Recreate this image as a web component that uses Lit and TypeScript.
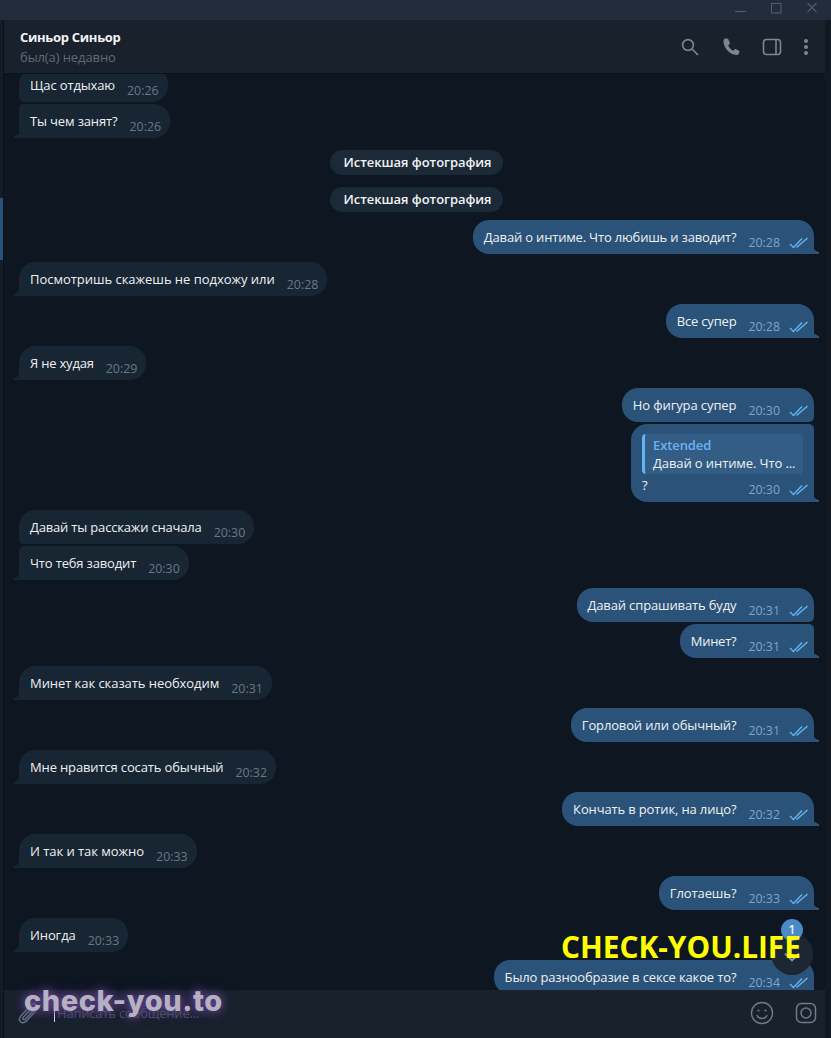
import { LitElement, html, css, svg } from "lit";
import { customElement } from "lit/decorators.js";

type Msg = { k: "in" | "out" | "svc"; t?: string; h?: string; tail?: boolean; cont?: boolean; reply?: boolean; ls?: number };

const msgs: Msg[] = [
  { k: "in", t: "Щас отдыхаю", h: "20:26" },
  { k: "in", t: "Ты чем занят?", h: "20:26", tail: true, cont: true },
  { k: "svc", t: "Истекшая фотография" },
  { k: "svc", t: "Истекшая фотография" },
  { k: "out", t: "Давай о интиме. Что любишь и заводит?", h: "20:28", tail: true, ls: -0.18 },
  { k: "in", t: "Посмотришь скажешь не подхожу или", h: "20:28", tail: true, ls: -0.03 },
  { k: "out", t: "Все супер", h: "20:28", tail: true, ls: -0.2 },
  { k: "in", t: "Я не худая", h: "20:29", tail: true, ls: -0.2 },
  { k: "out", t: "Но фигура супер", h: "20:30", ls: -0.1 },
  { k: "out", t: "?", h: "20:30", tail: true, cont: true, reply: true },
  { k: "in", t: "Давай ты расскажи сначала", h: "20:30", ls: -0.18 },
  { k: "in", t: "Что тебя заводит", h: "20:30", tail: true, cont: true, ls: -0.16 },
  { k: "out", t: "Давай спрашивать буду", h: "20:31" },
  { k: "out", t: "Минет?", h: "20:31", tail: true, cont: true, ls: -0.25 },
  { k: "in", t: "Минет как сказать необходим", h: "20:31", tail: true, ls: -0.06 },
  { k: "out", t: "Горловой или обычный?", h: "20:31", tail: true },
  { k: "in", t: "Мне нравится сосать обычный", h: "20:32", tail: true },
  { k: "out", t: "Кончать в ротик, на лицо?", h: "20:32", tail: true },
  { k: "in", t: "И так и так можно", h: "20:33", tail: true, ls: -0.04 },
  { k: "out", t: "Глотаешь?", h: "20:33", tail: true, ls: -0.1 },
  { k: "in", t: "Иногда", h: "20:33", tail: true, ls: -0.1 },
  { k: "out", t: "Было разнообразие в сексе какое то?", h: "20:34", tail: true },
];

const checks = svg`<svg class="chk" width="19" height="12" viewBox="0 0 19 12" fill="none" stroke="#64b5ef" stroke-width="1.4"><path d="M1 7l3.5 3.500L13 1.500"/><path d="M7.500 10.500L18.500 1"/></svg>`;

@customElement("app-root")
export class AppRoot extends LitElement {
  static styles = css`
    :host { display: block; width: 831px; height: 1038px; overflow: hidden; position: relative; background: #121a25; font-family: "Open Sans", "DejaVu Sans", sans-serif; font-size: 13px; letter-spacing: -0.1px; color: #f1f3f5; }
    .titlebar { height: 20px; background: #222d3b; display: flex; justify-content: flex-end; align-items: flex-start; }
    .titlebar svg { display: block; }
    .body { display: flex; height: 1018px; }
    .strip { width: 3px; background: #141c27; position: relative; flex: none; border-right: 1px solid #0b1119; }
    .accent { position: absolute; left: 0; top: 178px; width: 3px; height: 62px; background: #2b5278; }
    .rstrip { width: 6px; background: #121923; flex: none; }
    .main { flex: 1; min-width: 0; display: flex; flex-direction: column; background: #0e1621; }
    .head { height: 53px; flex: none; background: #18212c; display: flex; align-items: center; justify-content: space-between; padding: 0 16px 0 16px; box-shadow: 0 1px 0 #0b1119; position: relative; z-index: 2; box-sizing: border-box; }
    .name { font-weight: 700; font-size: 13px; letter-spacing: -0.3px; line-height: 18px; color: #f0f2f4; }
    .status { font-size: 13px; line-height: 18px; margin-top: 2px; color: #5f6b78; }
    .icons { display: flex; align-items: center; gap: 21px; }
    .icons svg { display: block; }
    .chat { flex: 1; min-height: 0; overflow: hidden; box-sizing: border-box; }
    .list { display: flex; flex-direction: column; margin-top: -13px; padding: 0 11px 0 15px; }
    .row { display: flex; margin-top: 8px; }
    .row.cont { margin-top: 2px; }
    .row.out { justify-content: flex-end; }
    .row.svc { justify-content: center; margin: 12px 0 0; }
    .row.svc + .row:not(.svc) { margin-top: 8px; }
    .pill { height: 25px; line-height: 24px; padding: 0 11px 0 13px; border-radius: 12.5px; background: #1c2936; font-weight: 600; letter-spacing: -0.05px; color: #f1f3f5; }
    .bub { position: relative; box-sizing: border-box; min-height: 34px; display: flex; border-radius: 16px; padding: 0 9px 0 11px; }
    .in .bub { background: #182533; border-bottom-left-radius: 5px; }
    .in.cont .bub { border-top-left-radius: 5px; }
    .out .bub { background: #2b5278; padding-right: 6px; border-bottom-right-radius: 5px; }
    .out.cont .bub { border-top-right-radius: 5px; }
    .bub.tail::after { content: ""; position: absolute; bottom: 0; width: 6px; height: 8px; }
    .in .bub.tail { border-bottom-left-radius: 0; }
    .out .bub.tail { border-bottom-right-radius: 0; }
    .in .bub.tail::after { left: -5px; background: radial-gradient(circle at 0 0, transparent 5.5px, #182533 6px); }
    .out .bub.tail::after { right: -5px; background: radial-gradient(circle at 100% 0, transparent 5.5px, #2b5278 6px); }
    .txt { line-height: 18px; padding-top: 8px; white-space: nowrap; letter-spacing: -0.14px; color: #eef1f4; }
    .meta { display: flex; align-items: center; margin-left: 12px; height: 18px; padding-top: 14px; font-size: 12.4px; letter-spacing: 0; line-height: 18px; white-space: nowrap; }
    .in .meta { color: #6a7886; }
    .out .meta { color: #7da6cf; }
    .chk { margin-left: 9px; display: block; }
    .out .bub.rep { display: flex; flex-direction: column; height: 78px; width: 183px; padding: 10px 11px 0; }
    .quote { height: 40px; box-sizing: border-box; border-radius: 4px; background: #335d85; border-left: 3px solid #64b5ef; padding: 2px 0 0 8px; line-height: 18px; white-space: nowrap; overflow: hidden; }
    .qn { color: #6ab3f3; font-weight: 600; }
    .qt { color: #eef1f4; }
    .repfoot { display: flex; justify-content: space-between; height: 28px; }
    .repfoot .q { line-height: 22px; color: #eef1f4; }
    .repfoot .meta { padding-top: 7px; margin-right: -5px; }
    .composer { height: 48px; flex: none; background: #18212c; display: flex; align-items: center; padding: 0 8px 2px 13px; position: relative; z-index: 2; box-sizing: border-box; }
    .clip { display: block; margin-top: 2px; }
    .cursor { width: 1px; height: 18px; background: #d8dde2; margin-left: 15px; flex: none; }
    .ph { color: #4a5562; margin-left: 2px; flex: 1; line-height: 18px; letter-spacing: -0.2px; }
    .cicons { display: flex; align-items: center; gap: 21px; }
    .cicons svg { display: block; }
    .down { position: absolute; left: 771px; top: 933px; width: 42px; height: 42px; border-radius: 50%; background: #1c2733; z-index: 3; display: flex; align-items: center; justify-content: center; }
    .downicon { margin-top: 6px; display: block; }
    .badge { position: absolute; left: 781px; top: 919px; width: 22px; height: 22px; border-radius: 50%; background: #4a8ac7; color: #eef3f8; font-size: 12px; font-weight: 600; line-height: 22px; text-align: center; z-index: 4; }
    .wm1 { position: absolute; left: 561px; top: 927px; font-size: 29.8px; line-height: 40px; font-weight: 700; letter-spacing: 0; color: #ffff00; z-index: 5; white-space: nowrap; }
    .wm2 { position: absolute; left: 24px; top: 981px; font-family: Inter, "Open Sans", sans-serif; font-size: 29px; line-height: 40px; font-weight: 800; color: #b6b1c0; z-index: 5; white-space: nowrap; letter-spacing: 0.55px; text-shadow: 0 0 8px #6c4a9e, 0 0 14px #5a3d88; }
  `;

  private bubble(m: Msg) {
    if (m.k === "svc") return html`<div class="row svc"><div class="pill">${m.t}</div></div>`;
    const cls = `row ${m.k} ${m.cont ? "cont" : ""}`;
    const tail = m.tail ? "tail" : "";
    if (m.reply) {
      return html`<div class=${cls}><div class="bub rep ${tail}">
        <div class="quote"><div class="qn">Extended</div><div class="qt">Давай о интиме. Что ...</div></div>
        <div class="repfoot"><span class="q">${m.t}</span><span class="meta">${m.h}${checks}</span></div>
      </div></div>`;
    }
    const ls = m.ls !== undefined ? `letter-spacing:${m.ls}px` : "";
    return html`<div class=${cls}><div class="bub ${tail}">
      <span class="txt" style=${ls}>${m.t}</span>
      <span class="meta">${m.h}${m.k === "out" ? checks : ""}</span>
    </div></div>`;
  }

  render() {
    return html`
      <div class="titlebar">
        <svg width="100" height="20" viewBox="0 0 100 20" fill="none" stroke="#4f5b68" stroke-width="1.2">
          <path d="M4 11.500h11"/>
          <rect x="40.500" y="3.500" width="9.500" height="9.500" stroke-width="1.100"/>
          <path d="M76.500 3l9 9M85.500 3l-9 9"/>
        </svg>
      </div>
      <div class="body">
        <div class="strip"><div class="accent"></div></div>
        <div class="main">
          <div class="head">
            <div>
              <div class="name">Синьор Синьор</div>
              <div class="status">был(а) недавно</div>
            </div>
            <div class="icons">
              <svg width="20" height="20" viewBox="0 0 20 20" fill="none" stroke="#7c8792" stroke-width="1.6"><circle cx="8" cy="8" r="5.400"/><path d="M12 12L18 18"/></svg>
              <svg width="20" height="20" viewBox="0 0 20 20" fill="#7c8792"><path d="M4.200 1.500c-.9.3-1.700 1.300-1.700 2.400 0 6.600 5.600 13.300 13 14 1 .1 2-.5 2.400-1.500l.5-1.600c.1-.5-.1-1-.6-1.200l-3-1.400c-.5-.2-1-.1-1.300.3l-1 1.300c-2.400-1-4.600-3.500-5.300-5.900l1.300-.9c.4-.3.5-.8.4-1.200L7.100 2c-.2-.5-.7-.7-1.200-.6z"/></svg>
              <svg width="20" height="18" viewBox="0 0 20 18" fill="none" stroke="#7c8792" stroke-width="1.600"><rect x="1.500" y="1.500" width="17" height="15" rx="3"/><path d="M14 1.500v15"/></svg>
              <svg width="6" height="20" viewBox="0 0 6 20" fill="#7c8792"><circle cx="3" cy="4" r="2"/><circle cx="3" cy="10" r="2"/><circle cx="3" cy="16" r="2"/></svg>
            </div>
          </div>
          <div class="chat"><div class="list">${msgs.map((m) => this.bubble(m))}</div></div>
          <div class="composer">
            <svg class="clip" width="22" height="24" viewBox="0 0 22 24" fill="none" stroke="#66727e" stroke-width="1.500" stroke-linecap="round"><path d="M19 8.500l-9.500 10.500c-1.800 2-4.500 2.300-6 .8s-1.200-4 .6-6L14 3c1.300-1.400 3.100-1.500 4.200-.5s1 2.800-.3 4.200L8.500 17c-.7.8-1.700.9-2.300.3s-.4-1.500.3-2.300L14.500 6.500"/></svg>
            <div class="cursor"></div>
            <div class="ph">Написать сообщение...</div>
            <div class="cicons">
              <svg width="24" height="24" viewBox="0 0 24 24" fill="none" stroke="#6f7b87" stroke-width="1.400"><circle cx="12" cy="12" r="10.500"/><circle cx="8.500" cy="9.500" r="1.100" fill="#6f7b87" stroke="none"/><circle cx="15.500" cy="9.500" r="1.100" fill="#6f7b87" stroke="none"/><path d="M7 14.500c1.200 2 3 3 5 3s3.800-1 5-3" stroke-linecap="round"/></svg>
              <svg width="22" height="22" viewBox="0 0 22 22" fill="none" stroke="#6f7b87" stroke-width="1.500"><rect x="1.500" y="1.500" width="19" height="19" rx="5"/><circle cx="11" cy="11" r="5"/></svg>
            </div>
          </div>
        </div>
        <div class="rstrip"></div>
      </div>
      <div class="down"><svg class="downicon" width="18" height="10" viewBox="0 0 18 10" fill="none" stroke="#8b96a1" stroke-width="1.800"><path d="M2 1.500l7 7 7-7"/></svg></div>
      <div class="badge">1</div>
      <div class="wm1">CHECK-YOU.LIFE</div>
      <div class="wm2">check-you.to</div>
    `;
  }
}
